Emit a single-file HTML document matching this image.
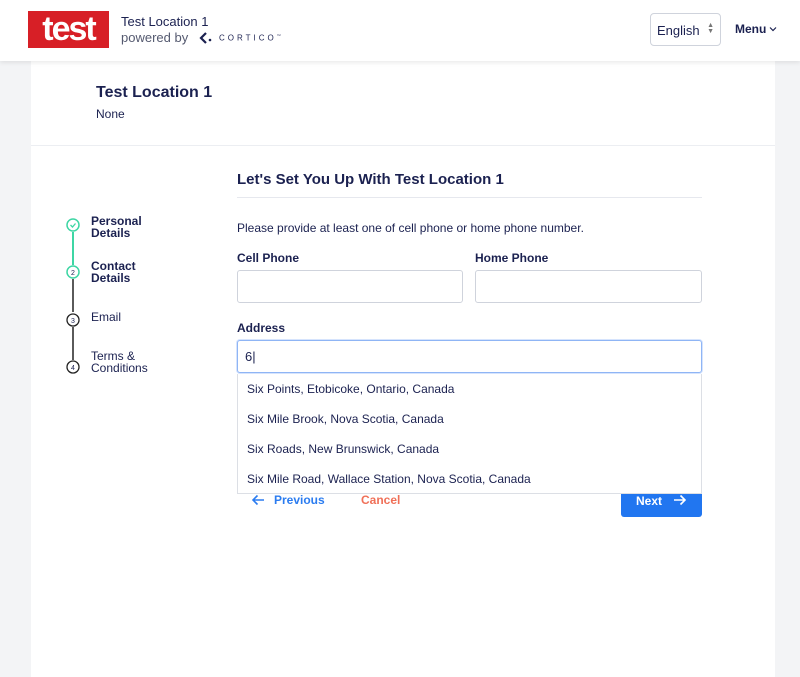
<!DOCTYPE html>
<html><head><style>
*{box-sizing:border-box;margin:0;padding:0}
body{width:800px;height:677px;background:#f3f4f6;font-family:"Liberation Sans",sans-serif;color:#1b2150;position:relative;overflow:hidden}
.a{position:absolute}
.hdr{left:0;top:0;width:800px;height:61px;background:#fff;box-shadow:0 2px 4px rgba(0,0,0,.08)}
.card{left:31px;top:61px;width:744px;height:616px;background:#fff}
.b{font-weight:bold}
.in{border:1px solid #cfd3dc;border-radius:3px;background:#fff}
.opt{position:absolute;left:9px;font-size:12px;color:#1b2150}
</style></head><body>
<div class="a card"></div>
<div class="a" style="left:31px;top:145px;width:744px;height:1px;background:#eceef2"></div>
<div class="a hdr"></div>
<div class="a" style="left:28px;top:11px;width:81px;height:37px;background:#d71f26;color:#fff;font-weight:bold;font-size:34px;line-height:37px;text-align:center;letter-spacing:-2px">test</div>
<div class="a" style="left:121px;top:14px;font-size:13px">Test Location 1</div>
<div class="a" style="left:121px;top:30px;font-size:13px;color:#555a70">powered by</div>
<svg class="a" style="left:199px;top:31px" width="14" height="14" viewBox="0 0 14 14"><path d="M7 2L2 7l5 5" stroke="#1b2150" stroke-width="2.2" fill="none"/><circle cx="11" cy="9" r="1.3" fill="#1b2150"/></svg>
<div class="a" style="left:219px;top:33px;font-size:8px;letter-spacing:3px;color:#1b2150">CORTICO<sup style="font-size:4px">™</sup></div>
<div class="a in" style="left:650px;top:13px;width:71px;height:33px;border-radius:4px;font-size:13px;padding:9px 0 0 6px">English<span style="position:absolute;right:6px;top:9px;font-size:7px;color:#777;line-height:6px">▲<br>▼</span></div>
<div class="a b" style="left:735px;top:22px;font-size:12px">Menu</div>
<svg class="a" style="left:769px;top:26px" width="8" height="6" viewBox="0 0 8 6"><path d="M1 1.5l3 3 3-3" stroke="#1b2150" stroke-width="1.2" fill="none"/></svg>
<div class="a b" style="left:96px;top:84px;font-size:16px">Test Location 1</div>
<div class="a" style="left:96px;top:107px;font-size:12px">None</div>
<div class="a b" style="left:237px;top:171px;font-size:15px">Let's Set You Up With Test Location 1</div>
<div class="a" style="left:237px;top:197px;width:465px;height:1px;background:#e6e8ee"></div>
<svg class="a" style="left:62px;top:214px" width="24" height="162" viewBox="0 0 24 162">
<line x1="11" y1="18" x2="11" y2="51" stroke="#3ed6a4" stroke-width="2"/>
<line x1="11" y1="65" x2="11" y2="98" stroke="#222" stroke-width="1.5"/>
<line x1="11" y1="113" x2="11" y2="146" stroke="#222" stroke-width="1.5"/>
<circle cx="11" cy="11" r="6" fill="none" stroke="#3ed6a4" stroke-width="1.5"/>
<path d="M8.5 11l2 2 3-3.5" stroke="#3ed6a4" stroke-width="1.3" fill="none"/>
<circle cx="11" cy="58" r="6" fill="none" stroke="#3ed6a4" stroke-width="1.5"/>
<circle cx="11" cy="106" r="6" fill="none" stroke="#222" stroke-width="1.3"/>
<circle cx="11" cy="153" r="6" fill="none" stroke="#222" stroke-width="1.3"/>
<text x="11" y="61" font-size="7" text-anchor="middle" fill="#1b2150" font-family="Liberation Sans">2</text>
<text x="11" y="109" font-size="7" text-anchor="middle" fill="#1b2150" font-family="Liberation Sans">3</text>
<text x="11" y="156" font-size="7" text-anchor="middle" fill="#1b2150" font-family="Liberation Sans">4</text>
</svg>
<div class="a b" style="left:91px;top:214px;font-size:12px;line-height:12px;padding-top:1px">Personal<br>Details</div>
<div class="a b" style="left:91px;top:259px;font-size:12px;line-height:12px;padding-top:1px">Contact<br>Details</div>
<div class="a" style="left:91px;top:310px;font-size:12px">Email</div>
<div class="a" style="left:91px;top:350px;font-size:12px;line-height:12px">Terms &amp;<br>Conditions</div>
<div class="a" style="left:237px;top:221px;font-size:12px">Please provide at least one of cell phone or home phone number.</div>
<div class="a b" style="left:237px;top:251px;font-size:12px">Cell Phone</div>
<div class="a b" style="left:475px;top:251px;font-size:12px">Home Phone</div>
<div class="a in" style="left:237px;top:270px;width:226px;height:33px"></div>
<div class="a in" style="left:475px;top:270px;width:227px;height:33px"></div>
<div class="a b" style="left:237px;top:321px;font-size:12px">Address</div>
<div class="a in" style="left:237px;top:340px;width:465px;height:33px;border-color:#8fb5f5;box-shadow:0 0 0 1px #d6e4fd;font-size:13px;padding:8px 0 0 7px">6|</div>
<div class="a" style="left:237px;top:486px;width:465px;height:1px;background:#eceef2"></div>
<div class="a" style="left:237px;top:374px;width:465px;height:120px;background:#fff;border:1px solid #dcdfe5;border-top:none">
<div class="opt" style="top:8px">Six Points, Etobicoke, Ontario, Canada</div>
<div class="opt" style="top:38px">Six Mile Brook, Nova Scotia, Canada</div>
<div class="opt" style="top:68px">Six Roads, New Brunswick, Canada</div>
<div class="opt" style="top:98px">Six Mile Road, Wallace Station, Nova Scotia, Canada</div>
</div>
<svg class="a" style="left:251px;top:494px" width="14" height="12" viewBox="0 0 14 12"><path d="M13 6H2M6.5 1.5L2 6l4.5 4.5" stroke="#2b7cf0" stroke-width="1.6" fill="none"/></svg>
<div class="a b" style="left:274px;top:493px;font-size:12px;color:#2b7cf0">Previous</div>
<div class="a b" style="left:361px;top:493px;font-size:12px;color:#f07058">Cancel</div>
<div class="a b" style="left:621px;top:494px;width:81px;height:23px;background:#2176f0;border-radius:0 0 3px 3px;color:#fff;font-size:12px;padding:0 0 0 15px">Next</div>
<svg class="a" style="left:673px;top:494px" width="14" height="12" viewBox="0 0 14 12"><path d="M1 6h11M7.5 1.5L12 6l-4.5 4.5" stroke="#fff" stroke-width="1.6" fill="none"/></svg>
</body></html>
